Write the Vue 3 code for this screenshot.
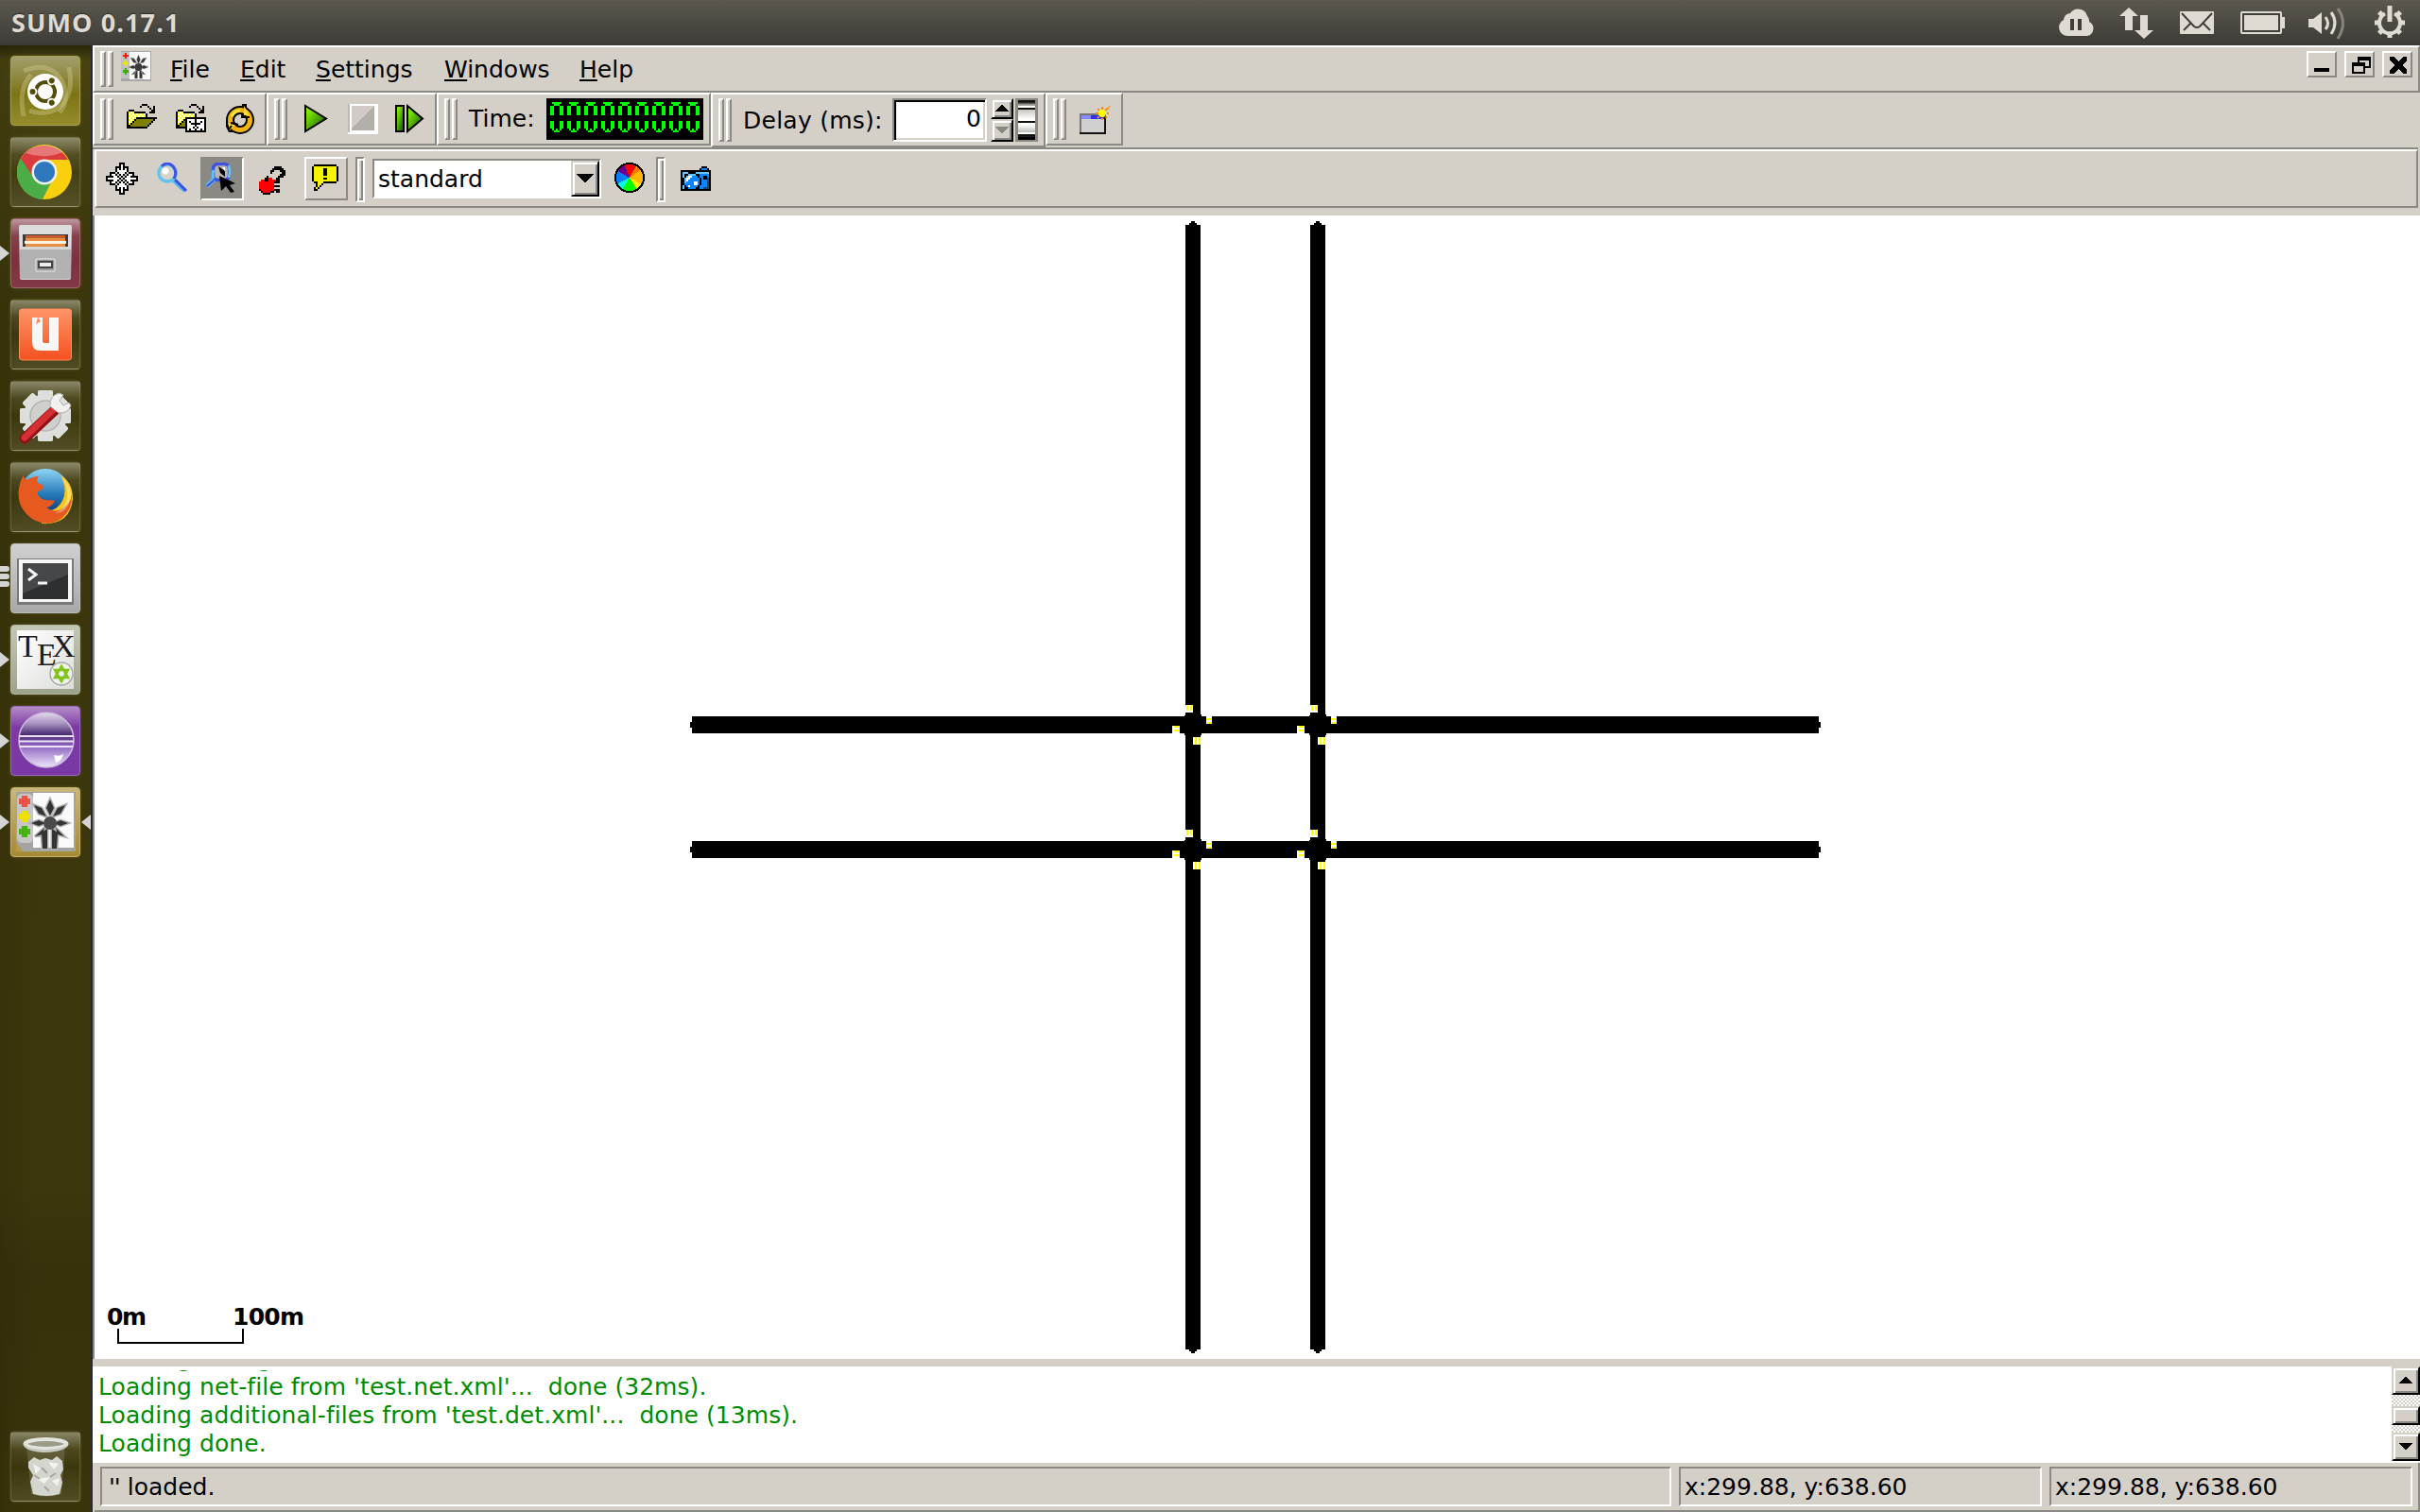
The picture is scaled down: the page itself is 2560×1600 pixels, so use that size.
<script setup>
import { h } from 'vue'

const palette = {
  '#': '#000', w: '#fff', y: '#ffff00', l: '#ffffc8', o: '#808000', g: '#00ff00',
  b: '#0a84ff', s: '#66c4ff', d: '#0a4c80', r: '#ff0000', v: '#f4f400'
}

// Bitmap icon: every character is one 2x2 cell
const Pixels = (props) => {
  const cells = []
  props.rows.forEach((row, y) => {
    ;[...row].forEach((c, x) => {
      if (c === '.') return
      let fill = palette[c]
      if (c === 'y') fill = (x + y) % 2 ? '#ffff00' : '#ffffff'
      cells.push(h('rect', { x: x * 2, y: y * 2, width: 2, height: 2, fill }))
    })
  })
  const w = props.rows[0].length * 2
  const t = props.rows.length * 2
  return h('svg', { width: w, height: t, viewBox: `0 0 ${w} ${t}`, 'shape-rendering': 'crispEdges' }, cells)
}
Pixels.props = ['rows']

const openNet = [
  '........###.....',
  '.......#...#..#.',
  '............#.#.',
  '.###.........##.',
  '#yyy######..###.',
  '#yyyyyyyyy#.....',
  '#yyyyyyyyy#.....',
  '#yyyy###########',
  '#yyy#ooooooooo#.',
  '#yy#ooooooooo#..',
  '#y#ooooooooo#...',
  '##ooooooooo#....',
  '###########.....'
]
const openSim = [
  '........###.....',
  '.......#...#..#.',
  '............#.#.',
  '.###.........##.',
  '#yyy######..###.',
  '#yyyyyyyyy#.....',
  '#yyyyyyyyy#.....',
  '#yyyy###########',
  '#yyy##wwww#wwww#',
  '#yy#o#w#ww#ww#w#',
  '#y#oo#ww#####ww#',
  '##ooo#wwww#wwww#',
  '######www#w#www#',
  '.....#w#ww#ww#w#',
  '.....###########'
]
const move = [
  '.......###.......',
  '.......#w#.......',
  '.....###w###.....',
  '.....#w#w#w#.....',
  '.....#wwwww#.....',
  '..###.#www#.###..',
  '..#ww#.#w#.#ww#..',
  '####ww#.#.#ww####',
  '#wwwwww#.#wwwwww#',
  '####ww#.#.#ww####',
  '..#ww#.#w#.#ww#..',
  '..###.#www#.###..',
  '.....#wwwww#.....',
  '.....#w#w#w#.....',
  '.....###w###.....',
  '.......#w#.......',
  '.......###.......'
]
const apple = [
  '........####..',
  '.......######.',
  '......##...###',
  '......#.....##',
  '...........###',
  '....#.....###.',
  '...##rr..##...',
  '.rr##rrrr##...',
  'rrrrrrrr###...',
  'rrrrrrrr......',
  'rrrrrrrr###...',
  'rrrrrrrr......',
  '#rrrrrrr###...',
  '.#rrrr##.##...',
  '..####........'
]
const balloon = [
  '.############.',
  '#vvvvvvvvvvvv#',
  '#vvvvv##vvvvv#',
  '#vvvvv##vvvvv#',
  '#vvvvv##vvvvv#',
  '#vvvvv##vvvvv#',
  '#vvvvvvvvvvvv#',
  '#vvvvv##vvvvv#',
  '#vvvvvvvvvvvv#',
  '.##vvv#######.',
  '..#vv#........',
  '..#v#.........',
  '.#v#..........',
  '.##...........'
]
const camera = [
  '...........###..',
  '..........#bbb#.',
  '################',
  '#sss####sssssss#',
  '#s##ssss##bbbbb#',
  '#s#swwbbb#bb##b#',
  '##swwbbbbb#b##d#',
  '##swbbbbbb#bbbd#',
  '##sbbbbwwb#bbbd#',
  '##bbbbbwwb#bbbd#',
  '#s#bwbbbb#bbbbd#',
  '#s##bbbb##bbddd#',
  '################'
]
const digit = [
  '.#####.', '..###..', '##...##', '##...##', '##...##', '##...##', '##...##',
  '.......', '.......', '.......',
  '##...##', '##...##', '##...##', '##...##', '.#.#.#.', '..###..'
].map((r) => r.replace(/#/g, 'g'))

const menus = [
  { k: 'F', t: 'ile', w: 74 },
  { k: 'E', t: 'dit', w: 80 },
  { k: 'S', t: 'ettings', w: 136 },
  { k: 'W', t: 'indows', w: 143 },
  { k: 'H', t: 'elp', w: 60 }
]

const messages = [
  'Loading configuration... done.',
  "Loading net-file from 'test.net.xml'...  done (32ms).",
  "Loading additional-files from 'test.det.xml'...  done (13ms).",
  'Loading done.'
]

const junctions = [
  { x: 1262, y: 767 }, { x: 1394, y: 767 }, { x: 1262, y: 899 }, { x: 1394, y: 899 }
]

const wheel = ['#ff0000', '#ff7800', '#ffb400', '#ffee00', '#00ff00', '#00ffe0', '#0080ff', '#6a0090']
const edges = [-22, 28, 55, 118, 148, 212, 244, 300, 338]
const pt = (a, r) => {
  const t = (a * Math.PI) / 180
  return `${16 + r * Math.sin(t)},${16 - r * Math.cos(t)}`
}
const slices = wheel.map((c, i) => ({
  c,
  d: `M16,16 L${pt(edges[i], 15)} A15,15 0 0 1 ${pt(edges[i + 1], 15)} Z`
}))
const teeth = [0, 45, 90, 135, 180, 225, 270, 315]
</script>

<template>
  <div class="screen">
    <header class="panel">
      <span class="title">SUMO 0.17.1</span>
      <svg class="tray" width="382" height="48" viewBox="2178 0 382 48" fill="#dfdbd2">
        <path d="M2187,38 a9,9 0 0 1 -4,-17 a8,8 0 0 1 7,-7 a10,10 0 0 1 18,3 a7,7 0 0 1 2,6 a8,8 0 0 1 -2,15z" />
        <path d="M2190,20h4v12h-4zM2198,20h4v12h-4z" fill="#3f3e39" />
        <path d="M2252,8l10,9h-6v15h-8v-15h-6zM2268,41l-10,-9h6v-16h8v16h6z" />
        <rect x="2306" y="12" width="36" height="24" rx="1" />
        <path d="M2308,14l13,14q3,2 6,0l13,-14M2310,32l8,-8M2338,32l-8,-8" fill="none" stroke="#3f3e39" stroke-width="2" />
        <path d="M2372,12h40q2,0 2,2v4h3v12h-3v4q0,2 -2,2h-40q-2,0 -2,-2v-20q0,-2 2,-2z" />
        <rect x="2373" y="15" width="38" height="18" fill="none" stroke="#3f3e39" stroke-width="2" />
        <path d="M2442,20h5l9,-7v23l-9,-7h-5z" />
        <g fill="none" stroke="#dfdbd2" stroke-width="3">
          <path d="M2460,18q5,7 0,13" />
          <path d="M2466,13q8,11 0,23" />
          <path d="M2473,9q11,15 0,32" stroke="#85837a" />
        </g>
        <g fill="none" stroke="#dfdbd2">
          <path d="M2523,14.500a11,11 0 1 0 10,0" stroke-width="4" />
          <path d="M2528,6v17" stroke-width="5" />
          <path v-for="a in teeth.slice(1)" :key="a" d="M2528,12v-4" stroke-width="5" :transform="`rotate(${a} 2528 24)`" />
        </g>
      </svg>
    </header>

    <div class="desktop">
      <nav class="launcher">
        <div class="tile dash">
          <svg viewBox="0 0 74 74">
            <g fill="none" stroke="#d9d49a" stroke-opacity=".35" stroke-width="5">
              <path d="M14,16q30,-12 42,14q6,18 -4,30" />
              <path d="M62,12q6,30 -12,44q-16,8 -30,2" />
              <path d="M14,64q-6,-30 8,-44" />
            </g>
            <circle cx="37" cy="38" r="19" fill="#fff" />
            <circle cx="37" cy="38" r="10" fill="none" stroke="#524b0a" stroke-width="4" />
            <g v-for="a in [30, 150, 270]" :key="a" :transform="`rotate(${a} 37 38)`">
              <circle cx="37" cy="25" r="4.500" fill="#fff" />
              <circle cx="37" cy="24.500" r="3" fill="#524b0a" />
            </g>
          </svg>
        </div>
        <div class="tile">
          <svg viewBox="0 0 74 74">
            <circle cx="36" cy="37" r="29" fill="#f9cf0e" />
            <path d="M36,37L10.900,22.500A29,29 0 0 0 34,66z" fill="#4aad48" />
            <path d="M36,37L44,46L34,66A29,29 0 0 1 20,60z" fill="#4aad48" />
            <path d="M11,22.500A29,29 0 0 1 61,24H36L25,44z" fill="#dc3b3e" />
            <path d="M16,17A29,29 0 0 1 56,16Q36,24 16,17z" fill="#fff" opacity=".3" />
            <circle cx="36" cy="37" r="13.500" fill="#f2f2ec" />
            <circle cx="36" cy="37" r="11" fill="#2f78bd" />
          </svg>
        </div>
        <div class="tile files">
          <i class="run" />
          <svg viewBox="0 0 74 74">
            <path d="M9,9q0,-2 2,-2h52q2,0 2,2l-1,54q0,2 -2,2h-50q-2,0 -2,-2z" fill="#dcdcdc" />
            <path d="M13,17h48v13h-48z" fill="#3e3a3a" />
            <path d="M16,18h42v12h-42z" fill="#e58f43" />
            <path d="M16,18h42v3h-42z" fill="#c85b2c" />
            <path d="M15,24h44v3h-44z" fill="#fff1df" />
            <path d="M10,30h54v32q0,2 -2,2h-50q-2,0 -2,-2z" fill="#b2b2b2" />
            <path d="M10,30h54v3h-54z" fill="#d6d6d6" />
            <rect x="27" y="43" width="20" height="13" rx="1" fill="#9a9a9a" stroke="#d8d8d8" stroke-width="1.500" />
            <rect x="30" y="46" width="14" height="6" fill="#eee" stroke="#444" stroke-width="2" />
          </svg>
        </div>
        <div class="tile">
          <svg viewBox="0 0 74 74">
            <defs>
              <linearGradient id="sc" x1="0" y1="0" x2="0" y2="1">
                <stop offset="0" stop-color="#ff9568" />
                <stop offset="1" stop-color="#f4511f" />
              </linearGradient>
            </defs>
            <rect x="9.500" y="10" width="55" height="54" rx="3" fill="url(#sc)" stroke="#ff8a5c" />
            <path d="M23,19h11v25q0,2 2,2h5v-27h10v35h-20q-8,0 -8,-9z" fill="#f7f7f5" />
            <path d="M29,19l-2,7l5,-3z" fill="#ff8454" />
          </svg>
        </div>
        <div class="tile">
          <svg viewBox="0 0 74 74">
            <g fill="#dededc">
              <rect v-for="a in teeth" :key="a" x="29" y="10" width="16" height="54" rx="2" :transform="`rotate(${a} 37 37)`" />
              <circle cx="37" cy="37" r="23" />
            </g>
            <circle cx="37" cy="37" r="16" fill="#cfcfcd" stroke="#b4b4b2" stroke-width="1.500" />
            <path d="M47,31L15,61" stroke="#8f1016" stroke-width="11" stroke-linecap="round" />
            <path d="M46,30L15,60" stroke="#d52e33" stroke-width="7" stroke-linecap="round" />
            <path d="M42,27q-1,-12 10,-14l4,2l-4,6l4,5l6,-3l2,3q-3,9 -13,8z" fill="#f0f0ee" stroke="#aaa" />
          </svg>
        </div>
        <div class="tile">
          <svg viewBox="0 0 74 74">
            <defs>
              <linearGradient id="ff" x1="0" y1="0" x2="0" y2="1">
                <stop offset="0" stop-color="#8fd4f4" />
                <stop offset=".5" stop-color="#2679b8" />
                <stop offset="1" stop-color="#10265c" />
              </linearGradient>
            </defs>
            <circle cx="37" cy="34" r="27" fill="url(#ff)" />
            <path d="M53,14q8,15 2,27q-6,12 -20,10l-2,14q30,2 33,-26q0,-18 -13,-25z" fill="#f7c81c" />
            <path d="M14,14q1,6 5,4q6,-3 11,-3q-3,4 -1,7q5,1 6,4q-1,4 -6,5q-1,4 2,6q4,4 11,3l5,1q-3,6 -9,7q10,8 21,-2q5,-4 6,-12q1,16 -10,25q-15,11 -32,1q-17,-12 -14,-32q1,-8 5,-14z" fill="#e65a20" />
            <path d="M54,16q9,12 5,26q-4,9 -12,12q14,0 17,-18q0,-12 -10,-20z" fill="#fff" opacity=".35" />
          </svg>
        </div>
        <div class="tile term">
          <i class="bars"><b /><b /><b /></i>
          <svg viewBox="0 0 74 74">
            <rect x="7" y="16" width="60" height="49" fill="#77797a" />
            <rect x="9" y="17" width="56" height="45" fill="#f6f6f6" />
            <rect x="13" y="21" width="48" height="38" fill="#2e2f30" />
            <path d="M13,21h48v12l-48,20z" fill="#464748" />
            <path d="M19,27l8,6l-8,6M29,42h10" fill="none" stroke="#f4f4f4" stroke-width="3" />
          </svg>
        </div>
        <div class="tile tex">
          <i class="run" />
          <div class="texword"><span>T</span><span class="low">E</span><span>X</span></div>
          <svg viewBox="0 0 74 74">
            <circle cx="54" cy="52" r="12" fill="#eef0ec" stroke="#a8aaa8" stroke-width="1.500" />
            <path d="M54,44l7,12h-14zM54,60l-7,-12h14z" fill="none" stroke="#83c41c" stroke-width="2.500" />
          </svg>
        </div>
        <div class="tile eclipse">
          <i class="run" />
          <svg viewBox="0 0 74 74">
            <defs>
              <linearGradient id="ec" x1="0" y1="0" x2="0" y2="1">
                <stop offset="0" stop-color="#e6dcf0" />
                <stop offset=".2" stop-color="#a892bf" />
                <stop offset=".4" stop-color="#4a2c70" />
                <stop offset=".6" stop-color="#8c63c0" />
                <stop offset="1" stop-color="#eee4fa" />
              </linearGradient>
            </defs>
            <circle cx="38" cy="36" r="29" fill="url(#ec)" stroke="#cbb9de" stroke-width="1.500" />
            <path d="M9,32h58M9,37.500h58M10,43h56" stroke="#ece2f6" stroke-width="2.200" />
            <path d="M46,52q8,2 10,-2q-1,8 -8,10z" fill="#fff" />
          </svg>
        </div>
        <div class="tile sumo">
          <i class="run" />
          <i class="active" />
          <svg viewBox="0 0 74 74">
            <rect x="6" y="5" width="63" height="63" fill="#a4a4a2" />
            <rect x="24" y="6" width="43" height="58" fill="#fafafa" />
            <rect x="7" y="7" width="17" height="52" rx="5" fill="#c6c6c6" />
            <path d="M6,58l7,10h-7z" fill="#b89a42" />
            <path d="M12,9h6v3h3v6h-3v3h-6v-3h-3v-6h3z" fill="#ec5244" />
            <path d="M12,25h6v3h3v6h-3v3h-6v-3h-3v-6h3z" fill="#f0e000" />
            <path d="M12,41h6v3h3v6h-3v3h-6v-3h-3v-6h3z" fill="#47b312" />
            <g v-for="w in [{ s: '#b0b0b0', n: 3 }, { s: '#333', n: 0 }]" :key="w.s" :fill="w.s" :stroke="w.s" :stroke-width="w.n">
              <path d="M42,13l4,9l-4,8l-4,-8zM25,19l8,3l5,9l-8,-3zM58,19l-8,3l-5,9l8,-3zM22,38l8,-3l7,3l-7,3zM61,38l-8,-3l-7,3l7,3zM26,52l10,-9l-2,7zM57,52l-9,-9l2,7zM33,48l6,-4v21h-5zM50,48l-6,-4v21h5z" />
            </g>
            <circle cx="42" cy="38" r="7" fill="#4a4a4a" />
          </svg>
        </div>
        <div class="tile trash">
          <svg viewBox="0 0 74 74">
            <path d="M17,16h41l-4,50q-17,5 -32,0z" fill="#a8a890" opacity=".25" />
            <path d="M19,32l6,-5l6,3l6,-2l7,2l5,-4l6,5l1,9l-3,6l2,8l-3,12q-14,4 -28,0l-3,-13l3,-7l-5,-8z" fill="#d5d5d0" />
            <path d="M24,34l8,5l-5,6zM40,32l6,8l5,-6zM28,50l8,5l6,-7zM44,52l6,6l2,-9z" fill="#f2f2ee" />
            <path d="M33,38l6,6M25,46l6,4M48,44l-6,4M36,58l5,5" stroke="#a6a6a0" stroke-width="2" />
            <ellipse cx="37.500" cy="13" rx="22" ry="5" fill="#9a9a88" stroke="#e4e4df" stroke-width="4" />
            <path d="M14,13q0,8 23,9q23,-1 24,-9q-3,5 -24,6q-20,-1 -23,-6z" fill="#c8c8c2" />
          </svg>
        </div>
      </nav>

      <main class="window">
        <div class="menubar">
          <div class="grip"><i /><i /></div>
          <svg class="appicon" width="32" height="32" viewBox="0 0 32 32">
            <rect width="32" height="32" fill="#a8a8a8" />
            <rect x="9" y="1" width="22" height="29" fill="#fafafa" />
            <rect y="1" width="9" height="28" fill="#c0c0c0" />
            <path d="M4,2h2v2h2v2h-2v2h-2v-2h-2v-2h2z" fill="#f01c0c" />
            <path d="M4,10h2v2h2v2h-2v2h-2v-2h-2v-2h2z" fill="#f4e400" />
            <path d="M4,18h2v2h2v3h-2v2h-2v-2h-2v-3h2z" fill="#3cae08" />
            <g fill="#333" stroke="#999" stroke-width=".6">
              <path d="M18.500,4l2,5l-2,5l-2,-5zM10,7l4,1l3,5l-4,-1zM27,7l-4,1l-3,5l4,-1zM8,17l5,-2l3,2l-3,2zM29,17l-5,-2l-3,2l3,2zM11,25l5,-5l-1,4zM26,25l-5,-5l1,4zM14.500,22l3,-2v9h-3zM22.500,22l-3,-2v9h3z" />
            </g>
            <circle cx="18.500" cy="17" r="4" fill="#3a3a3a" />
          </svg>
          <div class="menus">
            <span v-for="m in menus" :key="m.k" :style="{ width: m.w + 'px' }"><u>{{ m.k }}</u>{{ m.t }}</span>
          </div>
          <div class="winbtns">
            <span><svg width="32" height="28" shape-rendering="crispEdges"><path d="M8,18h16v4h-16z" /></svg></span>
            <span><svg width="32" height="28" shape-rendering="crispEdges"><path d="M14,6h14v12h-6v-2h4v-6h-10v2h-2zM8,12h14v12h-14zM10,16v6h10v-6z" fill-rule="evenodd" /></svg></span>
            <span><svg width="32" height="28" shape-rendering="crispEdges"><path d="M8,6h4l5,5l5,-5h4v4l-5,5l5,5v4h-4l-5,-5l-5,5h-4v-4l5,-5l-5,-5z" /></svg></span>
          </div>
        </div>

        <div class="toolrow">
          <section class="bar b1">
            <div class="grip"><i /><i /></div>
            <Pixels class="i-net" :rows="openNet" />
            <Pixels class="i-sim" :rows="openSim" />
            <svg class="i-reload" width="32" height="32" viewBox="0 0 32 32">
              <circle cx="16" cy="17" r="10.500" fill="none" stroke="#000" stroke-width="9" />
              <path d="M18,0h5v4l4,6v4h-10z M1,18l13,3l-5,4v5h-5l-3,-6z" fill="#000" />
              <circle cx="16" cy="17" r="10.500" fill="none" stroke="#f3b50c" stroke-width="5" />
              <path d="M20,2v10h5l-1,-4zM3,20l8,2l-6,6z" fill="#ffd634" />
              <path d="M7,13q3,-6 9,-6" stroke="#ffe23c" stroke-width="3" fill="none" />
              <path d="M26,14l-9,0M6,20l8,2M7,23l-3,4" stroke="#000" stroke-width="2" />
            </svg>
          </section>
          <section class="bar b2">
            <div class="grip"><i /><i /></div>
            <svg class="i-play" width="130" height="32" viewBox="0 0 130 32">
              <defs>
                <linearGradient id="pg" x1="0" y1="0" x2="1" y2="1">
                  <stop offset="0" stop-color="#98ff00" />
                  <stop offset=".3" stop-color="#70d800" />
                  <stop offset=".8" stop-color="#287000" />
                </linearGradient>
              </defs>
              <path d="M1,2v27l22,-13.500z" fill="url(#pg)" stroke="#000" stroke-width="2" />
              <path d="M46,0h32v32h-32z" fill="#fff" />
              <path d="M46,0h30v2h-28v28h-2z" fill="#bdbab2" />
              <path d="M48,2h26v26h-26z" fill="#d0ccc5" />
              <path d="M74,2v26h-26z" fill="#b3b0a9" />
              <path d="M48,0h30v2h-28v28h-2z" fill="#fff" />
              <path d="M97,2h8v27h-8z" fill="url(#pg)" stroke="#000" stroke-width="2" />
              <path d="M109,2v27l16,-13.500z" fill="url(#pg)" stroke="#000" stroke-width="2" />
            </svg>
          </section>
          <section class="bar b3">
            <div class="grip"><i /><i /></div>
            <span class="lbl time">Time:</span>
            <div class="lcd"><Pixels v-for="n in 9" :key="n" :rows="digit" /></div>
          </section>
          <section class="bar b4">
            <div class="grip"><i /><i /></div>
            <span class="lbl delay">Delay (ms):</span>
            <div class="field">0</div>
            <div class="spin">
              <span><svg width="14" height="10" shape-rendering="crispEdges"><path d="M7,0l7,8h-14z" /></svg></span>
              <span><svg width="14" height="10" shape-rendering="crispEdges"><path d="M7,9l7,-8h-14z" fill="#8a8983" /></svg></span>
            </div>
            <div class="dial"><i /><i /><i /></div>
          </section>
          <section class="bar b5">
            <div class="grip"><i /><i /></div>
            <svg class="i-new" width="34" height="32" viewBox="0 0 34 32">
              <path d="M0,8h28v22h-28z" fill="#111" />
              <path d="M0,8h26v20h-26z" fill="#777" />
              <path d="M2,10h24v18h-24z" fill="#d0d0d0" />
              <path d="M2,10h24v4h-24z" fill="#3030e8" />
              <path d="M2,10h10v4h-10z" fill="#8a8aff" />
              <path d="M24,1v14M17,8h14M19,3l10,10M29,3l-10,10M29,4l3,-4" stroke="#ff8c1a" stroke-width="2" stroke-dasharray="3 1" />
              <circle cx="24" cy="8" r="4" fill="#ffff00" />
            </svg>
          </section>
        </div>

        <div class="viewbar">
          <Pixels class="v-move" :rows="move" />
          <svg class="v-zoom" width="32" height="32" viewBox="0 0 32 32">
            <circle cx="11" cy="11" r="8" fill="#d8d4cc" />
            <circle cx="9" cy="9" r="3.500" fill="#fff" />
            <path d="M17,18l13,12" stroke="#5cb8ee" stroke-width="5" />
            <path d="M19,18l12,12" stroke="#3a50e0" stroke-width="3" />
            <circle cx="11" cy="11" r="9" fill="none" stroke="#62c4ee" stroke-width="3.500" />
            <path d="M5,4q6,-6 12,0q5,6 1,13" fill="none" stroke="#3f54e4" stroke-width="3" />
          </svg>
          <div class="pressed">
            <svg width="32" height="34" viewBox="0 0 32 34">
              <circle cx="16" cy="10" r="8" fill="#b8b6b0" />
              <path d="M9,17l-8,8" stroke="#5cb8ee" stroke-width="5" />
              <path d="M8,19l-7,6" stroke="#3a50e0" stroke-width="2" />
              <rect x="7.500" y="1.500" width="17" height="17" rx="5" fill="none" stroke="#3f54e4" stroke-width="3.500" />
              <path d="M24,3q2,7 0,13M8,17q-2,-4 0,-9" fill="none" stroke="#62c4ee" stroke-width="3" />
              <path d="M13,4l7,5v6l-5,-4z" fill="#000" />
              <path d="M17,5l3,4v-4z" fill="#fff" />
              <path d="M14,14l17,8l-6,2l5,7l-4,1l-5,-7l-5,5z" fill="#000" />
            </svg>
          </div>
          <Pixels class="v-apple" :rows="apple" />
          <div class="raised"><Pixels :rows="balloon" /></div>
          <i class="sep" />
          <div class="combo"><span>standard</span><b><svg width="18" height="10" shape-rendering="crispEdges"><path d="M0,0h18l-9,10z" /></svg></b></div>
          <svg class="wheel" width="32" height="32" viewBox="0 0 32 32" shape-rendering="crispEdges">
            <path v-for="s in slices" :key="s.c" :d="s.d" :fill="s.c" />
            <circle cx="16" cy="16" r="15" fill="none" stroke="#000" stroke-width="2" />
          </svg>
          <i class="sep s2" />
          <Pixels class="v-cam" :rows="camera" />
        </div>

        <div class="canvas">
          <svg width="2458" height="1210" viewBox="100 228 2458 1210" shape-rendering="crispEdges">
            <g v-for="x in [1254, 1386]" :key="x">
              <rect :x="x" y="238" width="16" height="1190" />
              <path :d="`M${x + 4},238v-2h2v-2h4v2h2v2zM${x + 4},1428v2h2v2h4v-2h2v-2z`" />
            </g>
            <g v-for="y in [758, 890]" :key="y">
              <rect x="732" :y="y" width="1192" height="18" />
              <path :d="`M732,${y + 6}h-2v6h2zM1924,${y + 6}h2v6h-2z`" />
            </g>
            <g v-for="j in junctions" :key="j.x + '-' + j.y" :transform="`translate(${j.x} ${j.y})`">
              <path d="M-8,-11h4l2,-2h4l2,2h5v2h2v16h-2v4h-2l-2,2h-10v-2h-4v-4h-4v-14h3z" />
              <path d="M-8,-21h8v8h-8zM0,13h8v8h-8zM14,-9h6v8h-6zM-22,1h8v8h-8z" fill="#fff" />
              <path d="M-7,-21h2v6h-2zM-3,-21h2v6h-2zM2,13h2v8h-2zM6,13h2v8h-2zM14,-7h6v2h-6zM15,-3h4v2h-4zM-20,1h5v2h-5zM-20,5h5v2h-5z" fill="#ff0" />
            </g>
            <path d="M125,1406v15h132v-15" fill="none" stroke="#000" stroke-width="2" />
            <g class="scale">
              <text x="113" y="1402" textLength="42">0m</text>
              <text x="246" y="1402" textLength="76">100m</text>
            </g>
          </svg>
        </div>
        <div class="split" />

        <div class="log">
          <div class="lines"><p v-for="m in messages" :key="m">{{ m }}</p></div>
          <div class="scroll">
            <span class="sb"><svg width="14" height="10" shape-rendering="crispEdges"><path d="M7,0l7,8h-14z" /></svg></span>
            <span class="sb thumb" />
            <span class="sb end"><svg width="14" height="10" shape-rendering="crispEdges"><path d="M7,9l7,-8h-14z" /></svg></span>
          </div>
        </div>

        <footer class="status">
          <div class="cell grow"><span class="quotes">''</span> loaded.</div>
          <div class="cell">x:299.88, y:638.60</div>
          <div class="cell">x:299.88, y:638.60</div>
        </footer>
      </main>
    </div>
  </div>
</template>

<style>
body { background: #d4d0c8; overflow: hidden; }
</style>

<style scoped>
.screen { width: 2560px; height: 1600px; display: flex; flex-direction: column; overflow: hidden; font: 25px/30px "DejaVu Sans", sans-serif; color: #000; }
.screen * { box-sizing: border-box; }
svg { display: block; flex: none; }
.panel { height: 48px; flex: none; display: flex; justify-content: space-between; background: linear-gradient(#605c50 0, #5a574c 4%, #3c3b37 100%); }
.title { font: bold 27px/48px "Open Sans", "Noto Sans", sans-serif; color: #dfdbd2; padding-left: 12px; letter-spacing: 1.1px; text-shadow: 0 -1px 1px #2c2b27; }
.desktop { flex: 1; display: flex; min-height: 0; }

.launcher { width: 98px; flex: none; display: flex; flex-direction: column; gap: 12px; padding: 11px 0 11px 11px; border-right: 2px solid #2a2a2c; background: linear-gradient(90deg, rgba(0,0,0,.08), transparent 40%), linear-gradient(#29260a 0, #47420f 16px, #423d0e 120px, #3a350a 300px, #3c370c 1200px, #37320c 1300px, #393409 1552px); }
.tile { position: relative; width: 74px; height: 74px; flex: none; border-radius: 4px; border: 1px solid rgba(200,200,160,.22); background: linear-gradient(rgba(190,190,165,.6) 0, rgba(120,118,80,.3) 25%, rgba(90,88,50,.12) 50%, rgba(130,128,95,.32) 100%); box-shadow: 0 0 3px rgba(200,200,150,.25); }
.tile svg { width: 74px; height: 74px; margin: -1px; }
.dash { background: linear-gradient(#a39f6e, #7d7415 55%, #958d2c); border-color: #a8a04e; }
.files { background: linear-gradient(#bf97a0 0, #84404b 25%, #7c313e 60%, #843a46); border-color: #a0606c; }
.term { background: linear-gradient(#d0d0d0, #a8a8a8); border-color: #bcbcbc; }
.tex { background: linear-gradient(#c3c7b6, #9ea38b); border-color: #b0b59e; }
.tex svg { position: absolute; left: 0; top: 0; }
.texword { position: absolute; left: 6px; top: 5px; width: 60px; height: 62px; background: linear-gradient(135deg, #fff, #dcdedb); display: flex; font: 34px/34px "Liberation Serif", serif; color: #1c1c1c; }
.texword span { width: 19px; margin-left: 1px; letter-spacing: -2px; }
.texword .low { padding-top: 9px; margin-right: -4px; }
.eclipse { background: linear-gradient(#b58cc8 0, #7d3aa4 30%, #7a38a6); border-color: #9a68ba; }
.sumo { background: linear-gradient(#c8b67e, #a68a35); border-color: #c4ae68; }
.trash { margin-top: auto; }
.run { position: absolute; left: -12px; top: 28px; border-left: 10px solid #d4d4d4; border-top: 8px solid transparent; border-bottom: 8px solid transparent; }
.active { position: absolute; left: 74px; top: 28px; border-right: 10px solid #d4d4d4; border-top: 8px solid transparent; border-bottom: 8px solid transparent; }
.bars { position: absolute; left: -12px; top: 23px; width: 10px; display: flex; flex-direction: column; gap: 2px; }
.bars b { height: 6px; background: #d4d4d4; border-radius: 0 4px 4px 0; }

.window { flex: 1; min-width: 0; display: flex; flex-direction: column; background: #d4d0c8; }
.grip { display: flex; gap: 2px; flex: none; width: 14px; }
.grip i { width: 6px; border: 2px solid; border-color: #fff #8b8983 #8b8983 #fff; }

.menubar { height: 50px; flex: none; display: flex; border: 2px solid; border-color: #fff #8b8983 #8b8983 #fff; }
.menubar .grip { margin: 4px 0 4px 6px; height: 38px; }
.appicon { margin: 4px 0 0 8px; }
.menus { display: flex; margin: 9px 0 0 20px; }
.menus span { flex: none; white-space: nowrap; }
.menus u { text-decoration-thickness: 2px; text-underline-offset: 2px; text-decoration-skip-ink: none; }
.winbtns { margin: 4px 6px 0 auto; display: flex; gap: 8px; }
.winbtns span { width: 32px; height: 28px; border: 2px solid; border-color: #fff #8b8983 #8b8983 #fff; }
.winbtns svg { margin: -2px; }

.toolrow { height: 60px; flex: none; display: flex; align-items: flex-start; margin-right: 2px; border-bottom: 2px solid #8b8983; }
.bar { height: 56px; flex: none; display: flex; align-items: flex-start; border: 2px solid; border-color: #fff #8b8983 #8b8983 #fff; }
.bar .grip { margin: 4px 0 0 6px; height: 44px; }
.b1 { width: 184px; }
.b2 { width: 180px; }
.b3 { width: 290px; }
.b4 { width: 354px; height: 58px; }
.b4 .grip { height: 46px; }
.b5 { width: 82px; }
.i-net { margin: 10px 0 0 14px; }
.i-sim { margin: 10px 0 0 20px; }
.i-reload { margin: 10px 0 0 20px; }
.i-play { margin: 10px 0 0 18px; }
.lbl { white-space: nowrap; }
.time { margin: 11px 0 0 12px; width: 82px; }
.lcd { display: flex; gap: 4px; width: 166px; height: 44px; margin-top: 4px; padding: 4px; background: #000; }
.delay { margin: 13px 0 0 12px; width: 158px; letter-spacing: .25px; }
.field { margin-top: 4px; width: 100px; height: 46px; padding: 5px 4px 0 0; text-align: right; background: #fff; border: 2px solid; border-color: #8b8983 #fff #fff #8b8983; box-shadow: inset 2px 2px #000, inset -2px -2px #d4d0c8; }
.spin { margin: 4px 0 0 4px; }
.spin span, .sb { display: flex; justify-content: center; align-items: center; border: 2px solid; border-color: #d4d0c8 #000 #000 #d4d0c8; box-shadow: inset 2px 2px #fff, inset -2px -2px #8b8983; background: #d4d0c8; }
.spin span { width: 24px; height: 22px; }
.spin span + span { height: 24px; }
.dial { margin: 4px 0 0 2px; width: 24px; height: 46px; border: 2px solid #8b8983; border-width: 2px 3px; background: linear-gradient(#111 0 2px, #a9a79f 5px, #fff 20px, #fff 26px, #bbb 34px, #777 37px, #000 39px); display: flex; flex-direction: column; gap: 12px; padding-top: 8px; }
.dial i { height: 2px; background: #111; box-shadow: 0 -2px #fff; }
.i-new { margin: 12px 0 0 14px; }

.viewbar { height: 62px; flex: none; margin: 0 2px 0 2px; display: flex; align-items: flex-start; border: 2px solid; border-color: #fff #8b8983 #8b8983 #fff; }
.v-move { margin: 12px 0 0 10px; }
.v-zoom { margin: 12px 0 0 20px; }
.pressed, .raised { width: 46px; height: 46px; margin-top: 6px; flex: none; border: 2px solid; }
.pressed { margin-left: 14px; background: #8b8983; border-color: #8b8983 #fff #fff #8b8983; padding: 4px 0 0 4px; }
.v-apple { margin: 16px 0 0 16px; }
.raised { margin-left: 20px; border-color: #fff #8b8983 #8b8983 #fff; padding: 6px; }
.sep { flex: none; width: 10px; height: 48px; margin: 6px 0 0 8px; border: 2px solid; border-color: #8b8983 #fff #fff #8b8983; box-shadow: inset 2px 2px #fff, inset -2px -2px #8b8983; }
.combo { display: flex; width: 242px; height: 42px; margin: 8px 0 0 8px; background: #fff; border: 2px solid; border-color: #8b8983 #fff #fff #8b8983; }
.combo span { flex: 1; padding: 5px 0 0 4px; }
.combo b { width: 30px; height: 38px; background: #d4d0c8; display: flex; align-items: center; justify-content: center; border: 2px solid; border-color: #d4d0c8 #000 #000 #d4d0c8; box-shadow: inset 2px 2px #fff, inset -2px -2px #8b8983; }
.wheel { margin: 12px 0 0 14px; }
.s2 { margin-left: 12px; }
.v-cam { margin: 16px 0 0 16px; }

.canvas { height: 1210px; flex: none; margin-top: 8px; background: #fff; border-left: 2px solid #8b8983; }
.scale text { font: bold 25px "DejaVu Sans", sans-serif; }
.split { height: 8px; flex: none; }

.log { height: 102px; flex: none; display: flex; background: #fff; }
.lines { flex: 1; margin: 4px 0 2px 6px; height: 96px; overflow: hidden; color: #008c00; letter-spacing: .06px; }
.lines p { margin: 0; white-space: pre; height: 30px; }
.lines p:first-child { margin-top: -27px; }
.scroll { width: 30px; height: 100px; display: flex; flex-direction: column; background: repeating-conic-gradient(#fff 0 25%, #d4d0c8 0 50%) 0 0 / 4px 4px; }
.sb { height: 30px; flex: none; }
.thumb { height: 20px; margin: 12px 0 8px; }

.status { height: 52px; flex: none; margin-left: 2px; display: flex; gap: 8px; padding: 4px 6px 4px 6px; border: solid #8b8983; border-width: 0 2px 2px 0; }
.cell { width: 384px; height: 42px; padding: 5px 0 0 4px; white-space: nowrap; border: 2px solid; border-color: #8b8983 #fff #fff #8b8983; }
.grow { width: auto; flex: 1; padding-left: 7px; }
.quotes { letter-spacing: -1px; }
</style>
